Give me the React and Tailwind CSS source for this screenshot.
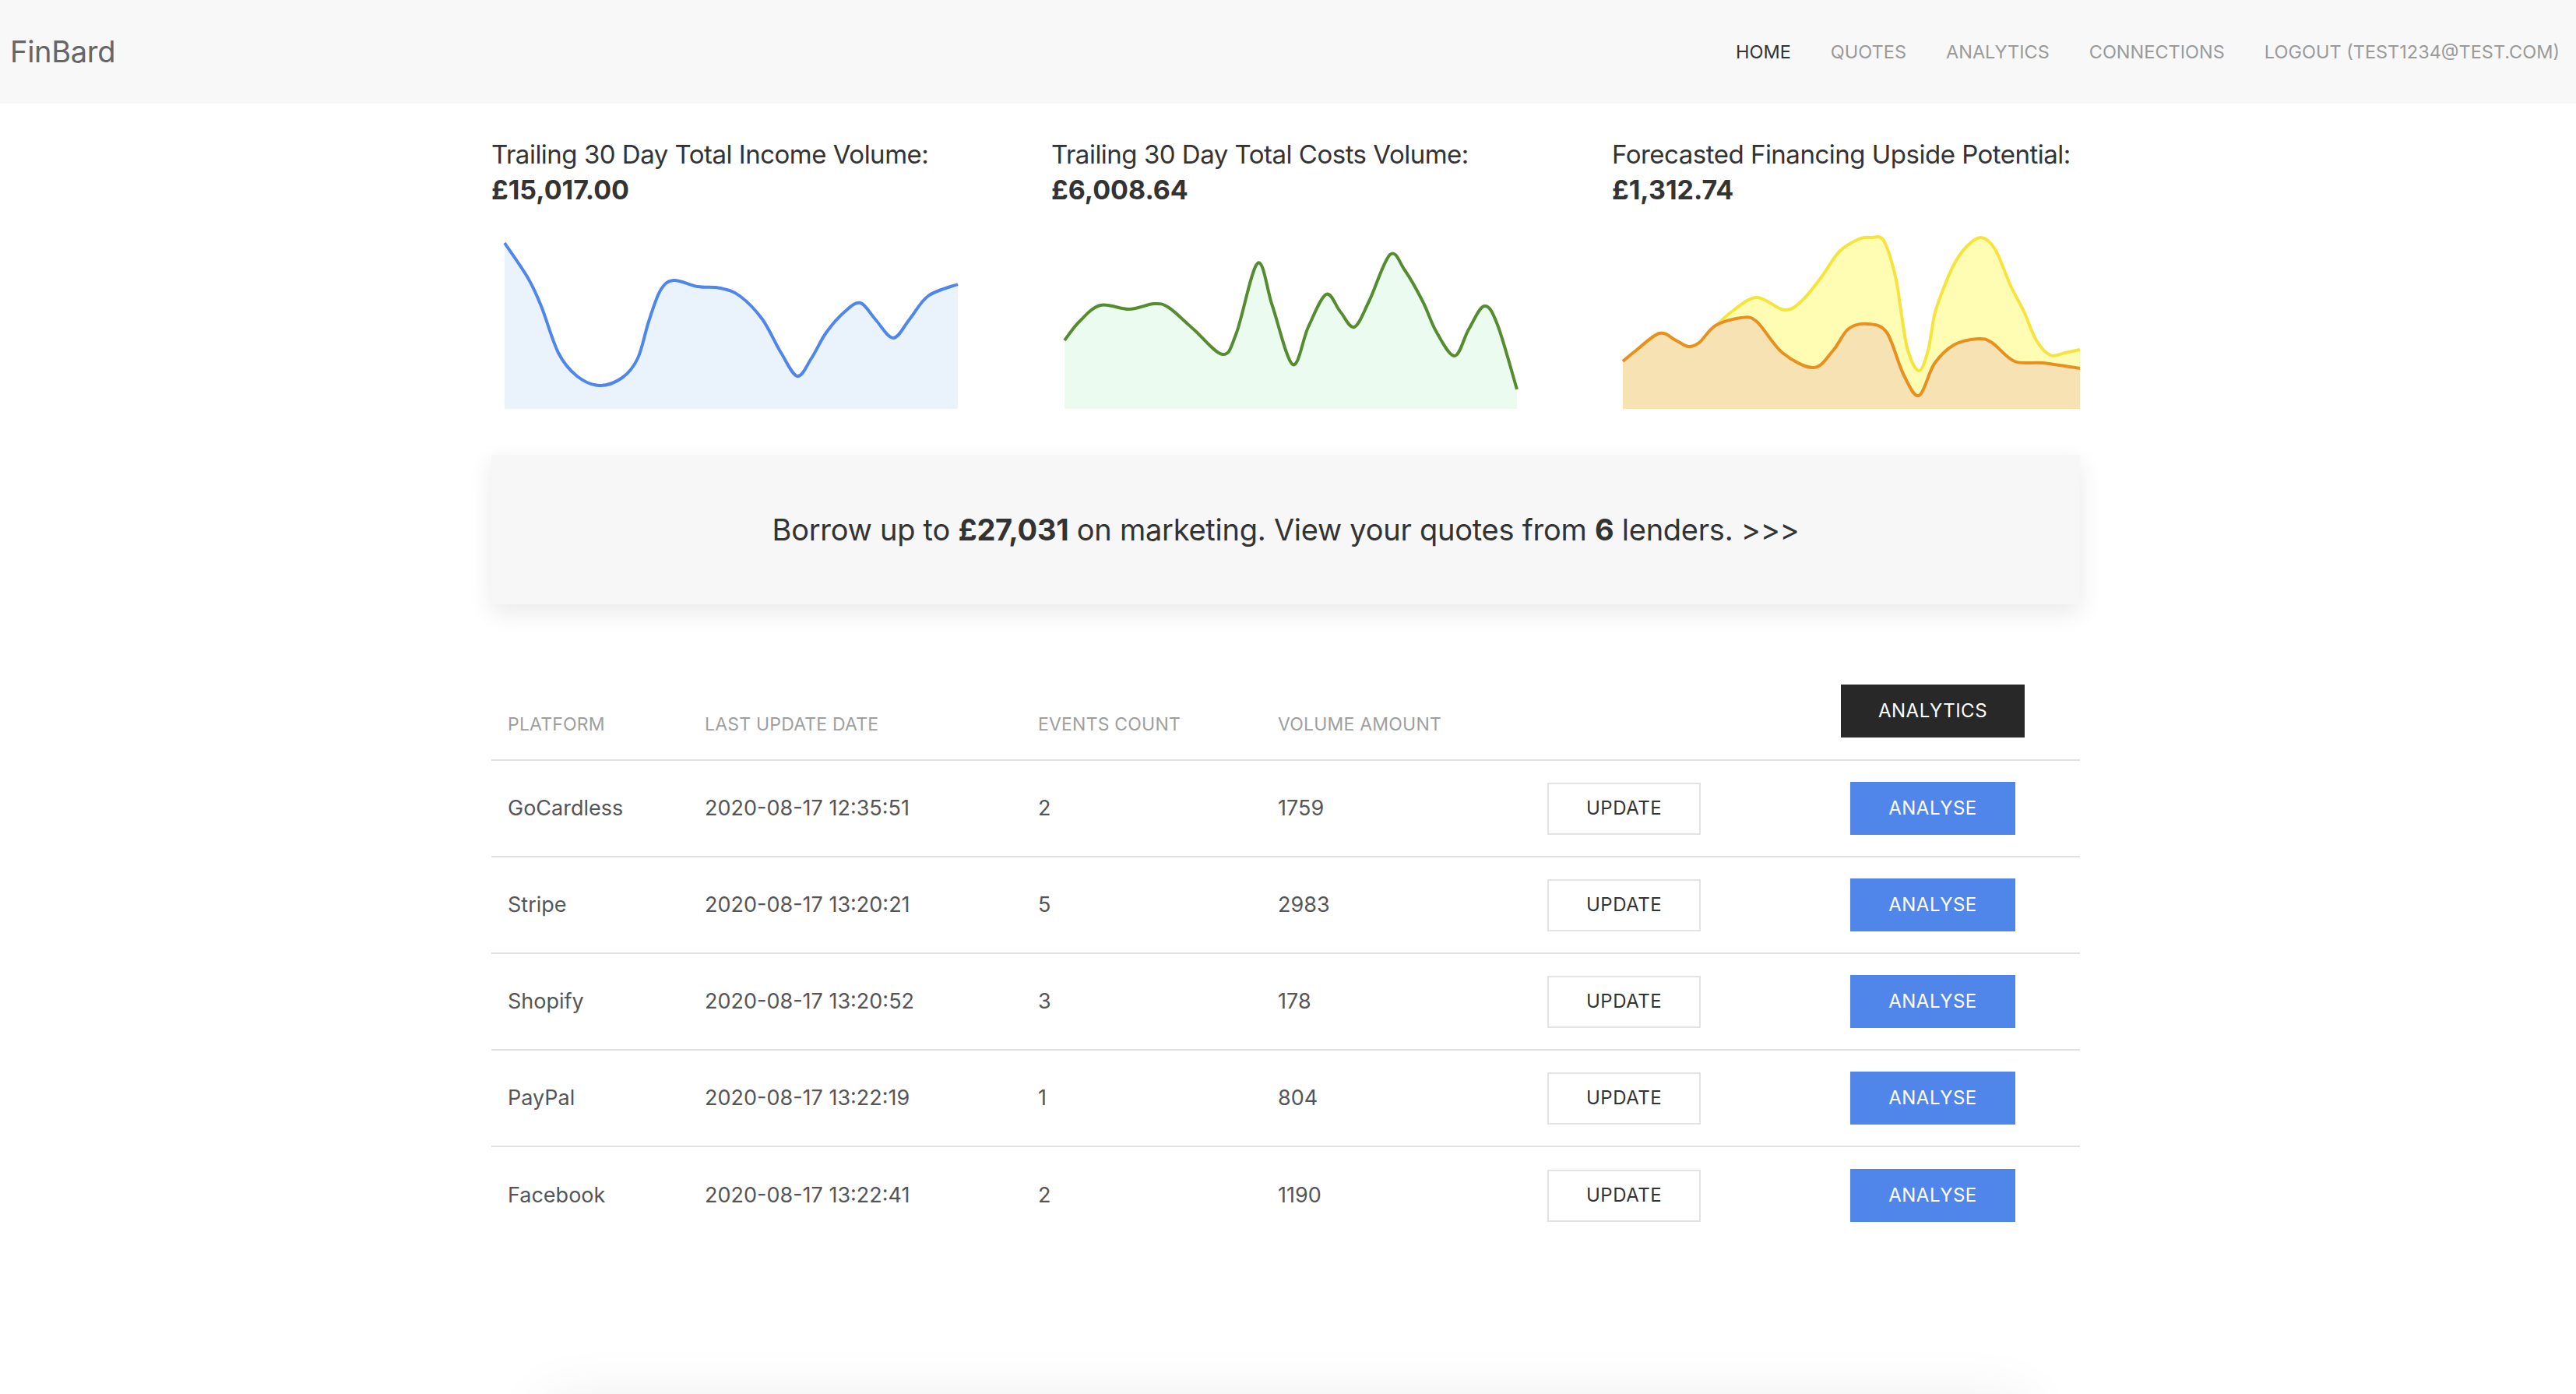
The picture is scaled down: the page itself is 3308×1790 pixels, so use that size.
import React from 'react';

// catmull-rom -> cubic bezier, keeps the chart lines soft like chart.js tension
const smooth = (pts) => {
  let d = `M${pts[0][0]},${pts[0][1]}`;
  for (let i = 0; i < pts.length - 1; i++) {
    const p0 = pts[i - 1] || pts[i];
    const p1 = pts[i];
    const p2 = pts[i + 1];
    const p3 = pts[i + 2] || p2;
    const c1x = p1[0] + (p2[0] - p0[0]) / 6;
    const c1y = p1[1] + (p2[1] - p0[1]) / 6;
    const c2x = p2[0] - (p3[0] - p1[0]) / 6;
    const c2y = p2[1] - (p3[1] - p1[1]) / 6;
    d += ` C${c1x},${c1y} ${c2x},${c2y} ${p2[0]},${p2[1]}`;
  }
  return d;
};

const area = (pts, h) => `${smooth(pts)} L${pts[pts.length - 1][0]},${h} L${pts[0][0]},${h} Z`;

const income = [
  [0, 7], [30, 52], [47, 88], [69, 148], [93, 178], [122, 190], [151, 180], [171, 155],
  [185, 108], [200, 68], [217, 55], [248, 63], [277, 65], [302, 75], [331, 105], [355, 148],
  [376, 178], [394, 155], [413, 122], [437, 95], [457, 84], [476, 105], [499, 129], [520, 105],
  [544, 75], [582, 60],
];

const costs = [
  [0, 132], [19, 108], [46, 87], [83, 92], [115, 85], [134, 90], [166, 118], [203, 150],
  [221, 122], [248, 33], [267, 88], [293, 163], [313, 115], [336, 73], [354, 95], [372, 115],
  [391, 82], [418, 22], [437, 42], [460, 82], [478, 122], [501, 152], [519, 118], [539, 88],
  [556, 112], [581, 195],
];

const base = [
  [0, 159], [17, 145], [47, 123], [68, 132], [84, 140], [98, 135], [119, 113], [152, 103],
  [172, 108], [205, 148], [245, 167], [270, 145], [290, 117], [315, 111], [339, 122], [360, 175],
  [380, 203], [400, 162], [425, 138], [456, 130], [474, 135], [503, 159], [539, 161], [587, 168],
];

const upside = [
  [0, 159], [17, 145], [47, 123], [68, 132], [84, 140], [98, 135], [115, 118], [140, 95],
  [172, 77], [207, 93], [229, 82], [254, 52], [278, 18], [303, 2], [319, 0], [335, 4],
  [350, 50], [358, 100], [366, 145], [380, 171], [392, 145], [400, 100], [410, 70], [425, 35],
  [441, 12], [460, 0], [478, 15], [498, 62], [515, 95], [531, 132], [549, 151], [568, 148],
  [587, 144],
];

const Spark = ({ pts, w, stroke, fill }) => (
  <svg width={w} height={220} viewBox={`0 0 ${w} 220`} className="block overflow-visible">
    <path d={area(pts, 220)} fill={fill} />
    <path d={smooth(pts)} fill="none" stroke={stroke} strokeWidth="4" strokeLinejoin="round" />
  </svg>
);

const Stacked = () => (
  <svg width={587} height={220} viewBox="0 0 587 220" className="block overflow-visible">
    <path d={area(upside, 220)} fill="#fffdb4" />
    <path d={smooth(upside)} fill="none" stroke="#f6e43c" strokeWidth="4" />
    <path d={area(base, 220)} fill="#f7e2b3" />
    <path d={smooth(base)} fill="none" stroke="#e8901f" strokeWidth="4" />
  </svg>
);

const rows = [
  { name: 'GoCardless', date: '2020-08-17 12:35:51', events: 2, volume: 1759 },
  { name: 'Stripe', date: '2020-08-17 13:20:21', events: 5, volume: 2983 },
  { name: 'Shopify', date: '2020-08-17 13:20:52', events: 3, volume: 178 },
  { name: 'PayPal', date: '2020-08-17 13:22:19', events: 1, volume: 804 },
  { name: 'Facebook', date: '2020-08-17 13:22:41', events: 2, volume: 1190 },
];

const grid = 'grid grid-cols-[253px_428px_308px_346px_377px_236px] pl-[21px]';
const title = 'text-[33px] leading-[46px] tracking-[-0.5px] whitespace-nowrap';
const amount = 'text-[34px] leading-[46px] font-bold';

export default function App() {
  return (
    <div className="min-h-screen bg-white font-[Inter,sans-serif] text-[#333]">
      {/* top nav */}
      <nav className="flex items-center justify-between h-[133px] bg-[#f8f8f8] pl-[13px] pr-[21px]">
        <div className="text-[38px] text-[#666] tracking-[-0.3px]">FinBard</div>
        <ul className="flex items-center gap-[51px] text-[23.5px] text-[#9a9a9a]">
          <li className="text-[#333]">HOME</li>
          <li>QUOTES</li>
          <li>ANALYTICS</li>
          <li>CONNECTIONS</li>
          <li>LOGOUT (TEST1234@TEST.COM)</li>
        </ul>
      </nav>

      <main className="w-[2040px] ml-[631px]">
        {/* stats */}
        <div className="grid grid-cols-[719px_720px_601px] pt-[42px]">
          <div>
            <div className={title}>Trailing 30 Day Total Income Volume:</div>
            <div className={amount}>£15,017.00</div>
            <div className="mt-[38px] pl-[17px]">
              <Spark pts={income} w={582} stroke="#4e86ec" fill="#eaf2fc" />
            </div>
          </div>
          <div>
            <div className={title}>Trailing 30 Day Total Costs Volume:</div>
            <div className={amount}>£6,008.64</div>
            <div className="mt-[38px] pl-[17px]">
              <Spark pts={costs} w={582} stroke="#548c2f" fill="#ebfbf0" />
            </div>
          </div>
          <div>
            <div className={title}>Forecasted Financing Upside Potential:</div>
            <div className={amount}>£1,312.74</div>
            <div className="mt-[38px] pl-[14px]">
              <Stacked />
            </div>
          </div>
        </div>

        {/* quotes banner */}
        <div className="mt-[59px] h-[192px] flex items-center justify-center bg-[#f7f7f7] shadow-[0_10px_30px_rgba(0,0,0,0.09)] text-[38px] tracking-[-0.25px]">
          <span>
            Borrow up to <b>£27,031</b> on marketing. View your quotes from <b>6</b> lenders. &gt;&gt;&gt;
          </span>
        </div>

        {/* connections table */}
        <div className="mt-[103px]">
          <div className={`${grid} items-end pb-[28px] border-b-2 border-[#e1e1e1] text-[23px] tracking-[0.2px] leading-[34px] text-[#9e9e9e]`}>
            <div>PLATFORM</div>
            <div>LAST UPDATE DATE</div>
            <div>EVENTS COUNT</div>
            <div>VOLUME AMOUNT</div>
            <div />
            <div className="flex justify-center">
              <button className="w-[236px] h-[68px] bg-[#282828] text-white text-[24px] tracking-[0.5px]">ANALYTICS</button>
            </div>
          </div>
          {rows.map((r, i) => (
            <div
              key={r.name}
              className={`${grid} items-center h-[124px] text-[27px] text-[#555] ${i < rows.length - 1 ? 'border-b-2 border-[#e1e1e1]' : ''}`}
            >
              <div>{r.name}</div>
              <div>{r.date}</div>
              <div>{r.events}</div>
              <div>{r.volume}</div>
              <div>
                <button className="w-[197px] h-[67px] border-2 border-[#e3e3e3] bg-white text-[#333] text-[24px] tracking-[0.5px]">UPDATE</button>
              </div>
              <div className="flex justify-center">
                <button className="w-[212px] h-[68px] bg-[#5086e9] text-white text-[24px] tracking-[0.5px]">ANALYSE</button>
              </div>
            </div>
          ))}
        </div>

        {/* next card, only its shadow shows above the fold */}
        <div className="mt-[200px] mx-auto w-[1900px] h-[300px] bg-white shadow-[0_0_70px_rgba(0,0,0,0.08)]" />
      </main>
    </div>
  );
}
